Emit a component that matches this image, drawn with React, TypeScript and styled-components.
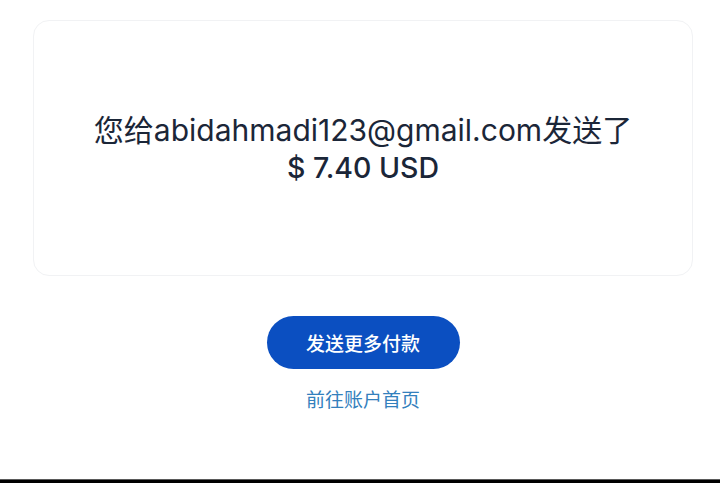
import styled, { createGlobalStyle } from "styled-components"

const GlobalStyle = createGlobalStyle`
  html, body {
    margin: 0;
    padding: 0;
    background: #ffffff;
  }
  body {
    font-family: Inter, "Noto Sans CJK SC", sans-serif;
  }
`

export default function App() {
  return (
    <>
      <GlobalStyle />
      <Page>
        <Main>
          <Card>
            <Message>您给abidahmadi123@gmail.com发送了</Message>
            <Amount>$ 7.40 USD</Amount>
          </Card>

          <Actions>
            <PrimaryButton type="button">发送更多付款</PrimaryButton>
            <TextLink href="#">前往账户首页</TextLink>
          </Actions>
        </Main>
        <BottomBar />
      </Page>
    </>
  )
}

const Page = styled.div`
  display: flex;
  flex-direction: column;
  min-height: 100vh;
  background: #ffffff;
`

const Main = styled.main`
  flex: 1;
  display: flex;
  flex-direction: column;
  align-items: center;
  padding: 20px 27px 0 33px;
`

const Card = styled.section`
  align-self: stretch;
  height: 256px;
  box-sizing: border-box;
  border: 1px solid #f1f2f4;
  border-radius: 16px;
  display: flex;
  flex-direction: column;
  align-items: center;
  justify-content: center;
  color: #1b2638;
  padding-top: 2px;
`

const Message = styled.div`
  font-size: 30px;
  line-height: 37px;
  font-weight: 400;
`

const Amount = styled.div`
  font-size: 28.5px;
  line-height: 37px;
  font-weight: 500;
`

const Actions = styled.div`
  display: flex;
  flex-direction: column;
  align-items: center;
  gap: 19px;
  margin-top: 40px;
`

const PrimaryButton = styled.button`
  width: 193px;
  height: 53px;
  border: none;
  border-radius: 27px;
  background: #0b4fc1;
  color: #ffffff;
  font-family: inherit;
  font-size: 19px;
  font-weight: 500;
  cursor: pointer;
`

const TextLink = styled.a`
  color: #3380bd;
  font-size: 19px;
  line-height: 26px;
  text-decoration: none;
`

const BottomBar = styled.div`
  height: 3px;
  background: #000000;
  border-top: 1px solid #5a5a5a;
`
